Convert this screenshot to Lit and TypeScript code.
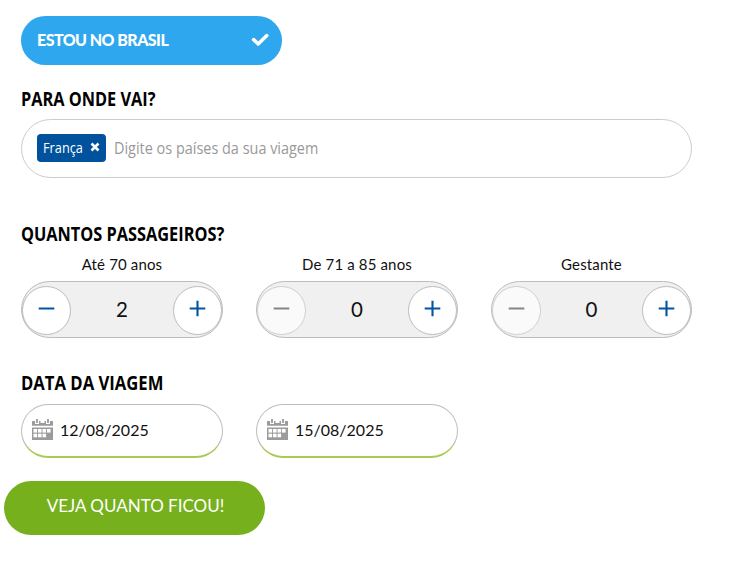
import { LitElement, html, css, svg } from "lit";
import { customElement, property } from "lit/decorators.js";

@customElement("passenger-stepper")
class PassengerStepper extends LitElement {
  @property() label = "";
  @property({ type: Number }) value = 0;

  static styles = css`
    :host { display: block; font-family: Lato, "Liberation Sans", sans-serif; color: #111; }
    .label { height: 17px; margin-bottom: 8px; line-height: 17px; font-size: 15px; text-align: center; letter-spacing: 0.15px; white-space: nowrap; }
    .track { box-sizing: border-box; height: 57px; border: 1px solid #bcbcbc; border-radius: 29px; background: #f0f0f0; display: flex; align-items: center; justify-content: space-between; padding-top: 1px; }
    .value { font-size: 20.5px; line-height: 24px; padding-bottom: 2px; }
    button { box-sizing: border-box; width: 49px; height: 49px; padding: 0; border: 1px solid #bcbcbc; border-radius: 50%; background: #fff; color: #0054a0; }
    button:disabled { background: #fafafa; border-color: #cfcfcf; color: #858585; }
    svg { display: block; margin: -4px auto 0; }
  `;

  render() {
    return html`
      <div class="label">${this.label}</div>
      <div class="track">
        <button aria-label="Diminuir" ?disabled=${this.value === 0}>
          <svg width="17" height="17" viewBox="0 0 17 17"><path d="M0.7 8.5H16.3" stroke="currentColor" stroke-width="2" /></svg>
        </button>
        <span class="value">${this.value}</span>
        <button aria-label="Aumentar">
          <svg width="17" height="17" viewBox="0 0 17 17"><path d="M0.7 8.5H16.3M8.5 0.7V16.3" stroke="currentColor" stroke-width="2.1" /></svg>
        </button>
      </div>
    `;
  }
}

@customElement("date-field")
class DateField extends LitElement {
  @property() value = "";

  static styles = css`
    :host { box-sizing: border-box; display: flex; align-items: center; gap: 7px; height: 54px; padding: 0 0 2px 10px; border: 1px solid #bcbcbc; border-bottom: 2px solid #abc955; border-radius: 27px; font-family: Lato, "Liberation Sans", sans-serif; color: #111; }
    .value { font-size: 16px; line-height: 20px; white-space: nowrap; }
  `;

  render() {
    const cells = [[1.5, 10], [6, 10], [10.5, 10], [15, 10], [1.5, 14.7], [6, 14.7], [10.5, 14.7]];
    return html`
      <svg width="21" height="21" viewBox="0 0 21 21">
        <path fill="#9b9b9b" d="M0 2H3V5H7V2H8.5V4H12.5V2H14V5H18V2H21V6.7H0ZM0 8.5H21V21H0Z" />
        <path fill="#9b9b9b" d="M4.1 0H5.9V4H4.1ZM15.1 0H16.9V4H15.1Z" />
        ${cells.map(([x, y]) => svg`<rect x=${x} y=${y} width="3.6" height="3.6" fill="#fff" />`)}
      </svg>
      <span class="value">${this.value}</span>
    `;
  }
}

@customElement("app-root")
class AppRoot extends LitElement {
  static styles = css`
    :host { box-sizing: border-box; display: block; width: 730px; height: 561px; padding: 16px 38px 0 21px; background: #fff; overflow: hidden; font-family: Lato, "Liberation Sans", sans-serif; }
    .origin { box-sizing: border-box; width: 261px; height: 49px; border-radius: 25px; padding: 0 12px 1px 16px; background: #2ea7ee; color: #fff; display: flex; align-items: center; justify-content: space-between; }
    .origin span { font-size: 16px; line-height: 20px; font-weight: 900; letter-spacing: -0.55px; white-space: nowrap; }
    h2 { margin: 0; width: max-content; height: 24px; line-height: 24px; font-family: "Open Sans", "Noto Sans", sans-serif; font-size: 19px; font-weight: 700; color: #000; transform-origin: left; transform: scaleX(0.859); white-space: nowrap; }
    .where { margin-top: 22px; }
    .who { margin-top: 44px; }
    .when { margin-top: 33px; transform: scaleX(0.877); }
    .search { box-sizing: border-box; margin-top: 8px; height: 59px; border: 1px solid #ccc; border-radius: 30px; padding: 0 15px 1px; display: flex; align-items: center; gap: 8px; font-family: "Open Sans", "Noto Sans", sans-serif; }
    .tag { box-sizing: border-box; width: 69px; height: 28px; padding: 0 6px 2px; border-radius: 4px; background: #00529c; color: #fff; display: flex; align-items: center; justify-content: space-between; }
    .tag span { width: 40px; font-size: 15px; transform-origin: left; transform: scaleX(0.85); white-space: nowrap; }
    .hint { padding-bottom: 2px; color: #999; font-size: 16.5px; transform-origin: left; transform: scaleX(0.875); white-space: nowrap; }
    .columns { display: grid; grid-template-columns: 202px 202px 201px; column-gap: 33px; }
    .dates { margin-top: 9px; }
    .steppers { margin-top: 10px; }
    .submit { display: block; width: 261px; height: 54px; margin: 23px 0 0 -17px; padding: 0 0 4px 2px; border: 0; border-radius: 27px; background: #76b01c; color: #fff; font: 17px/20px Lato, "Liberation Sans", sans-serif; white-space: nowrap; }
  `;

  render() {
    return html`
      <div class="origin">
        <span>ESTOU NO BRASIL</span>
        <svg width="19" height="14" viewBox="0 0 19 14"><path d="M2.6 6.6L7.2 10.9L15.8 2.6" fill="none" stroke="#fff" stroke-width="3.5" stroke-linecap="round" stroke-linejoin="round" /></svg>
      </div>
      <h2 class="where">PARA ONDE VAI?</h2>
      <div class="search">
        <div class="tag">
          <span>França</span>
          <svg width="10" height="10" viewBox="0 0 10 10"><path d="M1.5 1.5L8.5 8.5M8.5 1.5L1.5 8.5" stroke="#fff" stroke-width="2.6" /></svg>
        </div>
        <span class="hint">Digite os países da sua viagem</span>
      </div>
      <h2 class="who">QUANTOS PASSAGEIROS?</h2>
      <div class="columns steppers">
        <passenger-stepper label="Até 70 anos" value="2"></passenger-stepper>
        <passenger-stepper label="De 71 a 85 anos" value="0"></passenger-stepper>
        <passenger-stepper label="Gestante" value="0"></passenger-stepper>
      </div>
      <h2 class="when">DATA DA VIAGEM</h2>
      <div class="columns dates">
        <date-field value="12/08/2025"></date-field>
        <date-field value="15/08/2025"></date-field>
      </div>
      <button class="submit">VEJA QUANTO FICOU!</button>
    `;
  }
}
